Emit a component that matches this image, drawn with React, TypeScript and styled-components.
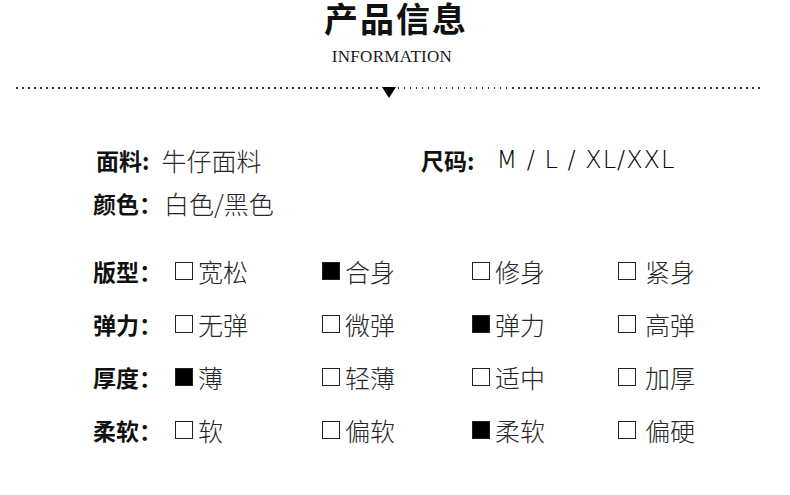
import React from 'react'
import styled, { createGlobalStyle } from 'styled-components'

const variables = {
  colorText: '#111111',
  colorValue: '#262626',
  colorWhite: '#ffffff',
  cjk: '"Noto Sans CJK SC", "Noto Sans", sans-serif'
}

const GlobalStyle = createGlobalStyle`
  html, body {
    margin: 0;
    padding: 0;
    background: ${variables.colorWhite};
  }
`

const Page = styled.div`
  width: 790px;
  height: 495px;
  overflow: hidden;
  background: ${variables.colorWhite};
  font-family: ${variables.cjk};
  color: ${variables.colorText};
`
const Header = styled.header`
  display: flex;
  flex-direction: column;
  align-items: center;
`
const Title = styled.h1`
  margin: 0;
  font-size: 34px;
  line-height: 36px;
  font-weight: 700;
  letter-spacing: 2px;
  padding-left: 2px;
`
const Subtitle = styled.div`
  margin-top: 12px;
  font-family: 'Liberation Serif', 'Times New Roman', serif;
  font-size: 17px;
  line-height: 18px;
  letter-spacing: 0.3px;
  color: #1a1a1a;
  padding-right: 6px;
`
const Divider = styled.div`
  display: flex;
  align-items: flex-start;
  margin: 20px 28px 0 16px;
`
const Dots = styled.div`
  flex: 1;
  height: 2px;
  margin-top: 1px;
  background: repeating-linear-gradient(to right, #333 0 1.5px, transparent 1.5px 6px);
`
const Arrow = styled.div`
  width: 0;
  height: 0;
  margin: 1px 2px 0;
  border-left: 7px solid transparent;
  border-right: 7px solid transparent;
  border-top: 11px solid #000;
`
const Basics = styled.section`
  display: flex;
  flex-direction: column;
  gap: 11px;
  margin-top: 46px;
  padding-left: 93px;
`
const BasicRow = styled.div`
  display: flex;
  align-items: center;
  height: 32px;
`
const Pair = styled.div<{ $width?: number; $indent?: number }>`
  display: flex;
  align-items: center;
  width: ${p => (p.$width ? `${p.$width}px` : 'auto')};
  padding-left: ${p => p.$indent || 0}px;
`
const Label = styled.span<{ $gap?: number }>`
  font-size: 23px;
  font-weight: 700;
  line-height: 32px;
  margin-right: ${p => p.$gap || 0}px;
  white-space: nowrap;
`
const Value = styled.span`
  font-size: 25px;
  font-weight: 300;
  line-height: 32px;
  color: ${variables.colorValue};
  white-space: pre;
`
const Sizes = styled(Value)`
  font-family: 'DejaVu Sans', sans-serif;
  font-size: 24px;
  font-weight: 200;
  letter-spacing: 1px;
  color: #000;
`
const Grid = styled.section`
  display: grid;
  grid-template-columns: 82px 147px 150px 146px auto;
  row-gap: 21px;
  margin-top: 36px;
  padding-left: 93px;
`
const Option = styled.div<{ $gap?: number }>`
  display: flex;
  align-items: center;
  gap: ${p => p.$gap || 5}px;
  height: 32px;
`
const Box = styled.span<{ $checked?: boolean }>`
  width: 18px;
  height: 18px;
  box-sizing: border-box;
  border: 1px solid #222;
  background: ${p => (p.$checked ? '#000' : 'transparent')};
  flex-shrink: 0;
`

type Choice = { text: string; checked?: boolean }

const rows: { label: string; options: Choice[] }[] = [
  {
    label: '版型：',
    options: [{ text: '宽松' }, { text: '合身', checked: true }, { text: '修身' }, { text: '紧身' }]
  },
  {
    label: '弹力：',
    options: [{ text: '无弹' }, { text: '微弹' }, { text: '弹力', checked: true }, { text: '高弹' }]
  },
  {
    label: '厚度：',
    options: [{ text: '薄', checked: true }, { text: '轻薄' }, { text: '适中' }, { text: '加厚' }]
  },
  {
    label: '柔软：',
    options: [{ text: '软' }, { text: '偏软' }, { text: '柔软', checked: true }, { text: '偏硬' }]
  }
]

const App: React.FC = () => {
  return (
    <Page>
      <GlobalStyle />
      <Header>
        <Title>产品信息</Title>
        <Subtitle>INFORMATION</Subtitle>
      </Header>
      <Divider>
        <Dots />
        <Arrow />
        <Dots />
      </Divider>
      <Basics>
        <BasicRow>
          <Pair $width={325} $indent={3}>
            <Label $gap={12}>面料:</Label>
            <Value>牛仔面料</Value>
          </Pair>
          <Pair>
            <Label $gap={22}>尺码:</Label>
            <Sizes>M / L / XL/XXL</Sizes>
          </Pair>
        </BasicRow>
        <BasicRow>
          <Pair>
            <Label $gap={2}>颜色：</Label>
            <Value>白色/黑色</Value>
          </Pair>
        </BasicRow>
      </Basics>
      <Grid>
        {rows.map(row => (
          <React.Fragment key={row.label}>
            <Label>{row.label}</Label>
            {row.options.map((opt, i) => (
              <Option key={opt.text} $gap={i === 3 ? 9 : 5}>
                <Box $checked={opt.checked} />
                <Value>{opt.text}</Value>
              </Option>
            ))}
          </React.Fragment>
        ))}
      </Grid>
    </Page>
  )
}

export default App
